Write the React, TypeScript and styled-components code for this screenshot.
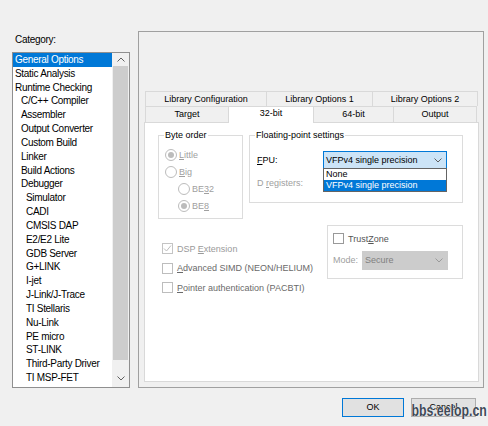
import React from 'react'
import styled, { createGlobalStyle } from 'styled-components'

const GlobalStyle = createGlobalStyle`
  html, body {
    margin: 0;
    padding: 0;
    background: #f0f0f0;
  }
  body {
    width: 488px;
    height: 426px;
    overflow: hidden;
    font-family: "Liberation Sans", Arial, sans-serif;
  }
  * {
    box-sizing: border-box;
  }
`

const Dialog = styled.div`
  width: 488px;
  height: 426px;
  padding: 31px 0 0 12px;
  display: flex;
  flex-direction: column;
`

const Main = styled.div`
  display: flex;
  gap: 8px;
  height: 357px;
`

const Sidebar = styled.div`
  width: 118px;
  display: flex;
  flex-direction: column;
`

const CategoryLabel = styled.div`
  height: 21px;
  padding: 2px 0 0 3px;
  font-size: 10px;
  letter-spacing: -0.3px;
  line-height: 13px;
  color: #000;
`

const ListBox = styled.div`
  height: 336px;
  border: 1px solid #8f8f8f;
  background: #fff;
  display: flex;
`

const Rows = styled.div`
  flex: 1;
  overflow: hidden;
`

const Row = styled.div<{ $level: number; $selected?: boolean }>`
  height: 13.83px;
  line-height: 13.83px;
  padding-left: ${p => [2, 8, 13][p.$level]}px;
  font-size: 10px;
  letter-spacing: -0.3px;
  white-space: nowrap;
  background: ${p => (p.$selected ? '#0078d7' : 'transparent')};
  color: ${p => (p.$selected ? '#fff' : '#000')};
`

const ScrollBar = styled.div`
  width: 17px;
  background: #f0f0f0;
  display: flex;
  flex-direction: column;
`

const ScrollArrow = styled.div<{ $h: number }>`
  height: ${p => p.$h}px;
  display: flex;
  align-items: center;
  justify-content: center;
`

const Thumb = styled.div`
  height: 294px;
  margin: 0 1px;
  background: #cdcdcd;
`

const Spacer = styled.div`
  flex: 1;
`

const Frame = styled.div`
  width: 346px;
  border: 1px solid #a0a0a0;
  padding: 59px 4px 5px 5px;
  display: flex;
  flex-direction: column;
`

const TabRow = styled.div`
  display: flex;
  padding-left: 1px;
`

const Tab = styled.div<{ $w: number; $h: number; $active?: boolean }>`
  position: relative;
  z-index: ${p => (p.$active ? 1 : 0)};
  width: ${p => p.$w}px;
  height: ${p => p.$h + (p.$active ? 1 : 0)}px;
  margin-right: -1px;
  margin-bottom: ${p => (p.$active ? -1 : 0)}px;
  border: 1px solid #d9d9d9;
  border-bottom: none;
  background: ${p => (p.$active ? '#fff' : '#f0f0f0')};
  font-size: 9px;
  line-height: ${p => p.$h - (p.$active ? 4 : 1)}px;
  text-align: center;
  color: #000;
  white-space: nowrap;
`

const Content = styled.div`
  flex: 1;
  background: #fff;
  border: 1px solid #d9d9d9;
  padding: 12px 15px 0 13px;
  display: flex;
  flex-direction: column;
`

const TopRow = styled.div`
  display: flex;
  gap: 6px;
`

const Group = styled.div<{ $w?: number; $h: number }>`
  position: relative;
  border: 1px solid #dcdcdc;
  ${p => (p.$w ? `width: ${p.$w}px;` : 'flex: 1;')}
  height: ${p => p.$h}px;
`

const Legend = styled.span`
  position: absolute;
  top: -6px;
  left: 5px;
  padding: 0 1px;
  background: #fff;
  font-size: 9px;
  line-height: 11px;
  color: #000;
  white-space: nowrap;
`

const RadioList = styled.div`
  padding: 10px 0 0 6px;
`

const RadioRow = styled.div<{ $indent?: boolean }>`
  display: flex;
  align-items: center;
  gap: 2px;
  height: 17px;
  padding-left: ${p => (p.$indent ? 13 : 0)}px;
  font-size: 9px;
  color: #a0a0a0;
`

const RadioDot = styled.span<{ $checked?: boolean }>`
  width: 12px;
  height: 12px;
  border-radius: 50%;
  border: 1px solid #bcbcbc;
  background: #fff;
  display: flex;
  align-items: center;
  justify-content: center;
  &::after {
    content: '';
    width: 6px;
    height: 6px;
    border-radius: 50%;
    background: #bcbcbc;
    display: ${p => (p.$checked ? 'block' : 'none')};
  }
`

const FieldArea = styled.div`
  padding: 15px 0 0 7px;
`

const FieldRow = styled.div<{ $gap?: number }>`
  display: flex;
  align-items: center;
  height: 18px;
  margin-top: ${p => p.$gap ?? 0}px;
  font-size: 9px;
`

const FieldLabel = styled.span<{ $w: number; $muted?: boolean }>`
  width: ${p => p.$w}px;
  color: ${p => (p.$muted ? '#a0a0a0' : '#000')};
`

const Combo = styled.div<{ $w: number; $h: number; $focused?: boolean }>`
  position: relative;
  width: ${p => p.$w}px;
  height: ${p => p.$h}px;
  border: 1px solid ${p => (p.$focused ? '#0078d7' : '#cccccc')};
  background: ${p => (p.$focused ? '#cce4f7' : '#cccccc')};
  color: ${p => (p.$focused ? '#000' : '#808080')};
  display: flex;
  align-items: center;
  justify-content: space-between;
  padding: 0 4px 0 2px;
  font-size: 9px;
  white-space: nowrap;
`

const DropList = styled.div`
  position: absolute;
  top: 100%;
  left: -1px;
  width: 124px;
  border: 1px solid #646464;
  background: #fff;
  z-index: 2;
`

const DropItem = styled.div<{ $selected?: boolean }>`
  height: 11px;
  line-height: 11px;
  padding-left: 2px;
  font-size: 9px;
  background: ${p => (p.$selected ? '#0078d7' : '#fff')};
  color: ${p => (p.$selected ? '#fff' : '#000')};
`

const BottomRow = styled.div`
  display: flex;
  justify-content: space-between;
  margin-top: 6px;
`

const CheckList = styled.div`
  padding: 14px 0 0 4px;
`

const CheckRow = styled.div<{ $h: number; $color: string }>`
  display: flex;
  align-items: center;
  gap: 4px;
  height: ${p => p.$h}px;
  font-size: 9px;
  color: ${p => p.$color};
  white-space: nowrap;
`

const Box = styled.span<{ $border: string }>`
  width: 11px;
  height: 11px;
  border: 1px solid ${p => p.$border};
  background: #fff;
  display: flex;
  align-items: center;
  justify-content: center;
`

const ZoneArea = styled.div`
  padding: 6px 0 0 5px;
`

const ButtonRow = styled.div`
  position: relative;
  display: flex;
  justify-content: flex-end;
  gap: 7px;
  margin-top: 10px;
  padding-right: 12px;
`

const Button = styled.div<{ $w: number; $default?: boolean }>`
  width: ${p => p.$w}px;
  height: 19px;
  border: 1px solid ${p => (p.$default ? '#0078d7' : '#adadad')};
  background: #e1e1e1;
  font-size: 9px;
  line-height: 16px;
  text-align: center;
  color: #000;
`

const Watermark = styled.span`
  position: absolute;
  right: 1px;
  top: 5px;
  font-size: 16px;
  line-height: 16px;
  font-weight: bold;
  color: #3f4a57;
  text-shadow: 0 0 1px #fff, 0 0 1px #fff;
  transform: scaleX(0.77);
  transform-origin: right center;
  white-space: nowrap;
`

const Chevron: React.FC<{ up?: boolean; color?: string }> = ({ up, color = '#606060' }) => (
  <svg width="8" height="5" viewBox="0 0 8 5">
    <path
      d={up ? 'M0.5 4.5 L4 1 L7.5 4.5' : 'M0.5 0.5 L4 4 L7.5 0.5'}
      fill="none"
      stroke={color}
      strokeWidth="1"
    />
  </svg>
)

const Tick: React.FC = () => (
  <svg width="9" height="9" viewBox="0 0 9 9">
    <path d="M1 4.5 L3.5 7 L8 1.5" fill="none" stroke="#bcbcbc" strokeWidth="1" />
  </svg>
)

const categories: [string, number][] = [
  ['General Options', 0],
  ['Static Analysis', 0],
  ['Runtime Checking', 0],
  ['C/C++ Compiler', 1],
  ['Assembler', 1],
  ['Output Converter', 1],
  ['Custom Build', 1],
  ['Linker', 1],
  ['Build Actions', 1],
  ['Debugger', 1],
  ['Simulator', 2],
  ['CADI', 2],
  ['CMSIS DAP', 2],
  ['E2/E2 Lite', 2],
  ['GDB Server', 2],
  ['G+LINK', 2],
  ['I-jet', 2],
  ['J-Link/J-Trace', 2],
  ['TI Stellaris', 2],
  ['Nu-Link', 2],
  ['PE micro', 2],
  ['ST-LINK', 2],
  ['Third-Party Driver', 2],
  ['TI MSP-FET', 2],
]

const App: React.FC = () => {
  return (
    <Dialog>
      <GlobalStyle />
      <Main>
        <Sidebar>
          <CategoryLabel>Category:</CategoryLabel>
          <ListBox>
            <Rows>
              {categories.map(([name, level], i) => (
                <Row key={name} $level={level} $selected={i === 0}>
                  {name}
                </Row>
              ))}
            </Rows>
            <ScrollBar>
              <ScrollArrow $h={13}>
                <Chevron up />
              </ScrollArrow>
              <Thumb />
              <Spacer />
              <ScrollArrow $h={17}>
                <Chevron />
              </ScrollArrow>
            </ScrollBar>
          </ListBox>
        </Sidebar>
        <Frame>
          <TabRow>
            <Tab $w={122} $h={15}>Library Configuration</Tab>
            <Tab $w={107} $h={15}>Library Options 1</Tab>
            <Tab $w={106} $h={15}>Library Options 2</Tab>
          </TabRow>
          <TabRow>
            <Tab $w={84} $h={16}>Target</Tab>
            <Tab $w={86} $h={16} $active>32-bit</Tab>
            <Tab $w={81} $h={16}>64-bit</Tab>
            <Tab $w={84} $h={16}>Output</Tab>
          </TabRow>
          <Content>
            <TopRow>
              <Group $w={85} $h={84}>
                <Legend>Byte order</Legend>
                <RadioList>
                  <RadioRow>
                    <RadioDot $checked />
                    <span><u>L</u>ittle</span>
                  </RadioRow>
                  <RadioRow>
                    <RadioDot />
                    <span><u>B</u>ig</span>
                  </RadioRow>
                  <RadioRow $indent>
                    <RadioDot />
                    <span>BE<u>3</u>2</span>
                  </RadioRow>
                  <RadioRow $indent>
                    <RadioDot $checked />
                    <span>BE<u>8</u></span>
                  </RadioRow>
                </RadioList>
              </Group>
              <Group $h={68}>
                <Legend>Floating-point settings</Legend>
                <FieldArea>
                  <FieldRow>
                    <FieldLabel $w={66}><u>F</u>PU:</FieldLabel>
                    <Combo $w={124} $h={18} $focused>
                      <span>VFPv4 single precision</span>
                      <Chevron />
                      <DropList>
                        <DropItem>None</DropItem>
                        <DropItem $selected>VFPv4 single precision</DropItem>
                      </DropList>
                    </Combo>
                  </FieldRow>
                  <FieldRow $gap={5}>
                    <FieldLabel $w={66} $muted>D <u>r</u>egisters:</FieldLabel>
                  </FieldRow>
                </FieldArea>
              </Group>
            </TopRow>
            <BottomRow>
              <CheckList>
                <CheckRow $h={19.5} $color="#9a9a9a">
                  <Box $border="#c4c4c4"><Tick /></Box>
                  <span>DSP <u>E</u>xtension</span>
                </CheckRow>
                <CheckRow $h={19.5} $color="#6a6a6a">
                  <Box $border="#bdbdbd" />
                  <span><u>A</u>dvanced SIMD (NEON/HELIUM)</span>
                </CheckRow>
                <CheckRow $h={19.5} $color="#6a6a6a">
                  <Box $border="#bdbdbd" />
                  <span><u>P</u>ointer authentication (PACBTI)</span>
                </CheckRow>
              </CheckList>
              <Group $w={136} $h={54}>
                <ZoneArea>
                  <CheckRow $h={13} $color="#555">
                    <Box $border="#999" />
                    <span>Trust<u>Z</u>one</span>
                  </CheckRow>
                  <FieldRow $gap={6}>
                    <FieldLabel $w={29} $muted>Mode:</FieldLabel>
                    <Combo $w={86} $h={19}>
                      <span>Secure</span>
                      <Chevron color="#9a9a9a" />
                    </Combo>
                  </FieldRow>
                </ZoneArea>
              </Group>
            </BottomRow>
          </Content>
        </Frame>
      </Main>
      <ButtonRow>
        <Button $w={62} $default>OK</Button>
        <Button $w={65}>Cancel</Button>
        <Watermark>bbs.eelop.cn</Watermark>
      </ButtonRow>
    </Dialog>
  )
}

export default App
